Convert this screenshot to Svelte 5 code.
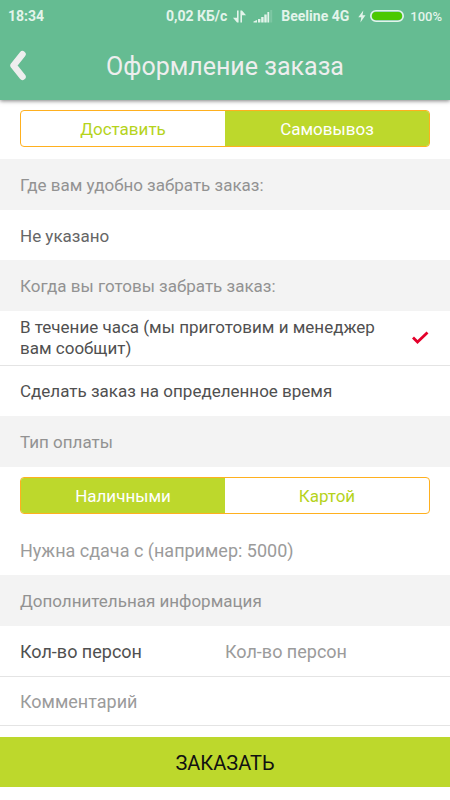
<script lang="ts">
	let delivery: string = 'pickup';
	let time: string = 'hour';
	let payment: string = 'cash';
	let change: string = '';
	let persons: string = '';
	let comment: string = '';

	const deliveryOptions = [
		{ value: 'deliver', label: 'Доставить' },
		{ value: 'pickup', label: 'Самовывоз' }
	];

	const timeOptions = [
		{ value: 'hour', label: 'В течение часа (мы приготовим и менеджер вам сообщит)' },
		{ value: 'custom', label: 'Сделать заказ на определенное время' }
	];

	const paymentOptions = [
		{ value: 'cash', label: 'Наличными' },
		{ value: 'card', label: 'Картой' }
	];
</script>

<div class="top">
	<div class="status">
		<span class="clock">18:34</span>
		<span>0,02 КБ/с</span>
		<svg class="traffic" width="13" height="13" viewBox="0 0 13 13" fill="currentColor">
			<path d="M4 0.5h1.6v12H4L0 7.8h4z" />
			<path d="M7.4 0.5H9l4 4.7H9v7.3H7.4z" />
		</svg>
		<svg class="signal" width="20" height="13" viewBox="0 0 20 13" fill="currentColor">
			<path d="M0.5 12.5v-1L4 10v2.5z" />
			<rect x="5" y="9" width="2.4" height="3.5" />
			<rect x="8.2" y="7" width="2.4" height="5.5" />
			<rect x="11.3" y="4.5" width="2.4" height="8" />
			<rect x="14.4" y="2" width="1.8" height="10.5" />
			<rect x="17.2" y="0" width="2" height="12.5" opacity="0.2" />
		</svg>
		<span class="carrier">Beeline 4G</span>
		<svg class="bolt" width="8" height="13" viewBox="0 0 8 13" fill="currentColor">
			<path d="M5.3 0.5L0.3 7.2h3L2.4 12.5l5.1-7.2h-3z" />
		</svg>
		<svg class="battery" width="34" height="12" viewBox="0 0 34 12">
			<rect x="0.8" y="0.8" width="32.4" height="10.4" rx="5.2" fill="none" stroke="currentColor" stroke-width="1.6" />
			<rect x="2" y="2" width="30" height="8" rx="4" fill="#4bc800" />
		</svg>
		<span class="percent">100%</span>
	</div>

	<header>
		<button class="back" type="button" aria-label="Назад">
			<svg width="18" height="32" viewBox="0 0 18 32" fill="none" stroke="currentColor" stroke-width="6.5" stroke-linecap="round" stroke-linejoin="round">
				<path d="M13.5 4.2L4.5 15.500l9 11.300" />
			</svg>
		</button>
		<h1>Оформление заказа</h1>
	</header>
</div>

<form on:submit|preventDefault>
	<div class="segment-wrap">
		<div class="segment" role="radiogroup" aria-label="Способ получения">
			{#each deliveryOptions as option}
				<label class:active={delivery === option.value}>
					<input type="radio" name="delivery" value={option.value} bind:group={delivery} />
					{option.label}
				</label>
			{/each}
		</div>
	</div>

	<h2>Где вам удобно забрать заказ:</h2>
	<button class="row place" type="button">Не указано</button>

	<h2>Когда вы готовы забрать заказ:</h2>
	{#each timeOptions as option}
		<label class="row choice">
			<input type="radio" name="time" value={option.value} bind:group={time} />
			<span>{option.label}</span>
			{#if time === option.value}
				<svg width="18" height="14" viewBox="0 0 18 14" fill="none" stroke="#e4002b" stroke-width="2.8">
					<path d="M2 6.500l4.500 4.500L16.500 1.500" />
				</svg>
			{/if}
		</label>
	{/each}

	<h2>Тип оплаты</h2>
	<div class="segment-wrap">
		<div class="segment" role="radiogroup" aria-label="Тип оплаты">
			{#each paymentOptions as option}
				<label class:active={payment === option.value}>
					<input type="radio" name="payment" value={option.value} bind:group={payment} />
					{option.label}
				</label>
			{/each}
		</div>
	</div>
	<div class="row change">
		<input type="text" aria-label="Нужна сдача" placeholder="Нужна сдача с (например: 5000)" bind:value={change} />
	</div>

	<h2>Дополнительная информация</h2>
	<div class="row line split">
		<label for="persons">Кол-во персон</label>
		<input id="persons" type="text" inputmode="numeric" placeholder="Кол-во персон" bind:value={persons} />
	</div>
	<div class="row line">
		<input type="text" aria-label="Комментарий" placeholder="Комментарий" bind:value={comment} />
	</div>

	<button class="submit" type="submit">ЗАКАЗАТЬ</button>
</form>

<style>
	:global(body) {
		background: #fff;
		color: #505050;
		font-family: Roboto, sans-serif;
		font-size: 17px;
		line-height: 21px;
	}

	.top {
		position: relative;
		background: #65bc92;
		color: #eee;
		box-shadow: 0 1px 4px rgba(0, 0, 0, 0.5);
	}

	.status {
		display: flex;
		align-items: center;
		height: 32px;
		padding: 0 8px;
		color: #e3f4eb;
		font-size: 14px;
		font-weight: 700;
	}

	.clock {
		margin-right: auto;
	}

	.traffic {
		margin-left: 6px;
	}

	.signal {
		margin: 0 8px 0 7px;
	}

	.bolt {
		margin: 0 4px 0 9px;
	}

	.percent {
		margin-left: 6px;
		font-size: 13px;
		font-weight: 500;
	}

	header {
		display: grid;
		grid-template-columns: 48px 1fr 48px;
		align-items: center;
		height: 68px;
	}

	h1 {
		margin: 0;
		padding-top: 2px;
		font-size: 25px;
		font-weight: 400;
		line-height: 32px;
		text-align: center;
	}

	button {
		border: 0;
		background: none;
		color: inherit;
		font: inherit;
		cursor: pointer;
	}

	.back {
		display: flex;
		padding: 0 9px;
	}

	.segment-wrap {
		padding: 10px 20px 12px;
	}

	.segment {
		display: grid;
		grid-template-columns: 1fr 1fr;
		height: 35px;
		border: 1px solid #ffb01f;
		border-radius: 4px;
		overflow: hidden;
	}

	.segment label {
		display: flex;
		align-items: center;
		justify-content: center;
		padding-top: 2px;
		color: #b5d31c;
		cursor: pointer;
	}

	.segment label.active {
		background: #bdd82c;
		color: #fff;
	}

	input[type='radio'] {
		position: absolute;
		opacity: 0;
		margin: 0;
	}

	h2 {
		display: flex;
		align-items: center;
		box-sizing: border-box;
		min-height: 51px;
		margin: 0;
		padding: 6px 20px 4px;
		background: #f3f3f3;
		color: #929292;
		font-size: 17px;
		font-weight: 400;
	}

	.row {
		display: flex;
		align-items: center;
		box-sizing: border-box;
		width: 100%;
		min-height: 50px;
		padding: 6px 20px;
	}

	.place {
		padding-top: 8px;
		color: #666;
		text-align: left;
	}

	.choice {
		min-height: 51px;
		gap: 20px;
		cursor: pointer;
	}

	.choice span {
		flex: 1;
	}

	.choice svg {
		margin-right: 1px;
	}

	.choice + .choice,
	.line + .line {
		border-top: 1px solid #e4e4e4;
	}

	.line:last-of-type {
		border-bottom: 1px solid #e4e4e4;
	}

	.change {
		min-height: 49px;
	}

	.split {
		display: grid;
		grid-template-columns: 1fr 1fr;
		font-size: 18px;
	}

	input[type='text'] {
		width: 100%;
		min-width: 0;
		padding: 0;
		border: 0;
		outline: 0;
		background: none;
		color: inherit;
		font: inherit;
		font-size: 18px;
	}

	input::placeholder {
		color: #9b9b9b;
		opacity: 1;
	}

	.submit {
		display: block;
		width: 100%;
		height: 50px;
		margin: 11px 0 13px;
		padding: 2px 0 0;
		background: #bdd82c;
		color: #111;
		font-size: 20px;
	}
</style>
